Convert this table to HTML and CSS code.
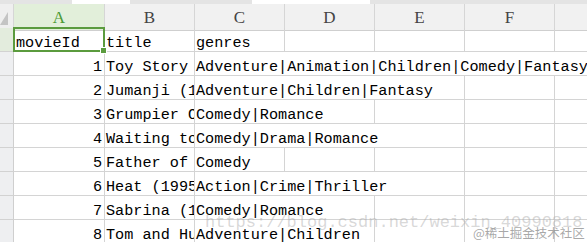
FILE: index.html
```html
<!DOCTYPE html>
<html>
<head>
    <title>movies.csv</title>
    <link rel="stylesheet" href="styles.css">
</head>
<body>
    <div class="sheet">
        <div class="topbar">
            <span class="seg gray" style="width: 72px"></span>
            <span class="seg white" style="width: 58px"></span>
            <span class="seg gray" style="width: 122px"></span>
            <span class="seg white" style="width: 118px"></span>
            <span class="seg gray fill"></span>
        </div>
        <div class="grid">
            <!-- column headers -->
            <div class="hd corner">
                <svg width="14" height="26" viewBox="0 0 14 26"><polygon points="0,21 8,21 8,8" fill="#c4c4c4"/></svg>
            </div>
            <div class="hd col active">A</div>
            <div class="hd col">B</div>
            <div class="hd col">C</div>
            <div class="hd col">D</div>
            <div class="hd col">E</div>
            <div class="hd col">F</div>
            <div class="hd col"></div>

            <!-- row 1 -->
            <div class="rh active"></div>
            <div class="cell selected">movieId</div>
            <div class="cell">title</div>
            <div class="cell">genres</div>
            <div class="cell"></div>
            <div class="cell"></div>
            <div class="cell"></div>
            <div class="cell"></div>
        </div>
        <div class="grid" id="rows"></div>
        <div class="watermark">https://blog.csdn.net/weixin_40990818</div>
        <div class="badge">@稀土掘金技术社区</div>
    </div>

    <script>
        const movies = [
            [1, "Toy Story (1995)", "Adventure|Animation|Children|Comedy|Fantasy"],
            [2, "Jumanji (1995)", "Adventure|Children|Fantasy"],
            [3, "Grumpier Old Men (1995)", "Comedy|Romance"],
            [4, "Waiting to Exhale (1995)", "Comedy|Drama|Romance"],
            [5, "Father of the Bride Part II (1995)", "Comedy"],
            [6, "Heat (1995)", "Action|Crime|Thriller"],
            [7, "Sabrina (1995)", "Comedy|Romance"],
            [8, "Tom and Huck (1995)", "Adventure|Children"]
        ];

        const rows = document.getElementById("rows");
        const charWidth = 9.12;

        movies.forEach(([id, title, genres]) => {
            // genres text runs over the empty cells on its right
            const width = genres.length * charWidth + 4;
            const span = Math.min(5, Math.ceil(width / 90));

            let html = `<div class="rh"></div>`;
            html += `<div class="cell num">${id}</div>`;
            html += `<div class="cell">${title}</div>`;
            html += `<div class="cell" style="grid-column: span ${span}">${genres}</div>`;
            for (let i = span; i < 5; i++) {
                html += `<div class="cell"></div>`;
            }
            rows.insertAdjacentHTML("beforeend", html);
        });
    </script>
</body>
</html>
```

FILE: styles.css
```css
body {
    margin: 0;
    background-color: #fff;
    overflow: hidden;
}

.sheet {
    position: relative;
    width: 587px;
    height: 242px;
    overflow: hidden;
}

.topbar {
    display: flex;
    height: 4px;
}

.topbar .seg {
    display: block;
    height: 4px;
}

.topbar .gray {
    background-color: #e4e4e4;
}

.topbar .white {
    background-color: #fff;
}

.topbar .fill {
    flex: 1;
}

.grid {
    display: grid;
    grid-template-columns: 14px 91px 90px 90px 90px 90px 90px 90px;
    grid-auto-rows: 24px;
}

.hd {
    box-sizing: border-box;
    height: 27px;
    padding-top: 2px;
    background-color: #f1f1f1;
    border-right: 1px solid #d6d6d6;
    border-bottom: 1px solid #cfcfcf;
    font-family: "Liberation Serif", serif;
    font-size: 17px;
    line-height: 24px;
    color: #444;
    text-align: center;
}

.hd.corner {
    padding-top: 0;
    background-color: #efefef;
}

.hd.corner svg {
    display: block;
}

.hd.active {
    background-color: #e2efda;
    color: #4c9a35;
}

.rh {
    box-sizing: border-box;
    background-color: #eeeff1;
    border-right: 1px solid #cfcfcf;
    border-bottom: 1px solid #d2d2d2;
}

.rh.active {
    background-color: #e3ecdd;
}

.cell {
    box-sizing: border-box;
    padding: 4px 0 0 1px;
    border-right: 1px solid #d4d4d4;
    border-bottom: 1px solid #d4d4d4;
    font-family: "Liberation Mono", monospace;
    font-size: 15.2px;
    line-height: 23px;
    color: #000;
    white-space: nowrap;
    overflow: hidden;
}

.cell.num {
    text-align: right;
    padding-right: 2px;
}

.cell.selected {
    position: relative;
    padding-left: 2px;
    overflow: visible;
}

.cell.selected::after {
    content: "";
    position: absolute;
    top: -1px;
    left: -1px;
    right: -1px;
    bottom: -1px;
    border: 2px solid #5b9b3e;
}

.cell.selected::before {
    content: "";
    position: absolute;
    right: -3px;
    bottom: -3px;
    width: 5px;
    height: 5px;
    background-color: #5b9b3e;
    border: 1px solid #fff;
    z-index: 1;
}

.watermark {
    position: absolute;
    left: 205px;
    top: 213px;
    font-family: "Liberation Mono", monospace;
    font-size: 17px;
    color: rgba(170, 170, 170, 0.45);
    white-space: nowrap;
}

.badge {
    position: absolute;
    left: 473px;
    top: 223px;
    font-family: "Noto Sans CJK SC", sans-serif;
    font-size: 12.5px;
    color: rgba(140, 140, 140, 0.75);
    white-space: nowrap;
}
```
